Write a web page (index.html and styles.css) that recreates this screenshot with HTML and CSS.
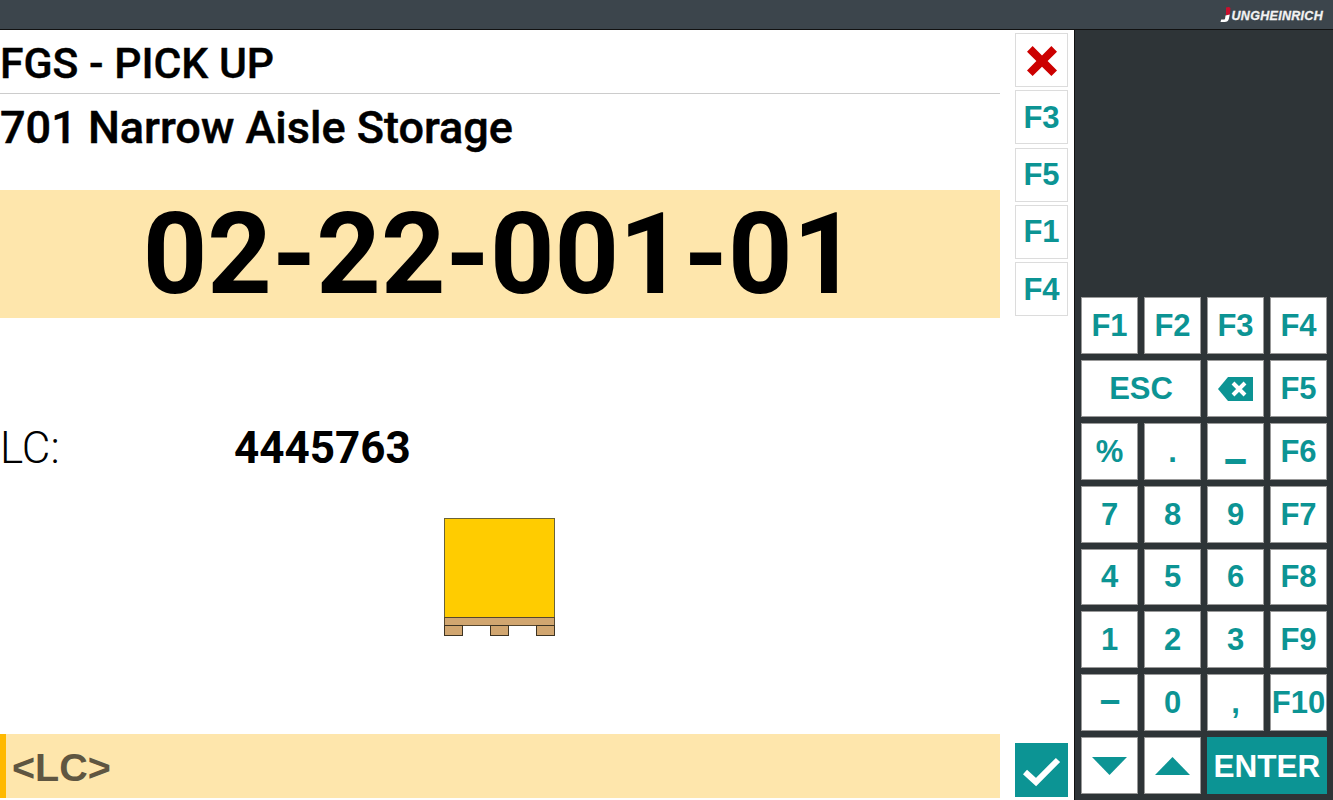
FILE: index.html
```html
<!DOCTYPE html>
<html lang="en">
<head>
  <meta charset="UTF-8">
  <title>FGS - PICK UP</title>
  <link rel="stylesheet" href="styles.css">
</head>
<body>
  <header class="topbar">
    <div class="brand">
      <svg class="brand-mark" width="12" height="16" viewBox="0 0 12 16"><path d="M6 0.5 Q9 -0.5 10.5 1 L9.8 7.5 L6 8.5 Z" fill="#c8102e"/><path d="M5.5 8.5 L9.8 7.5 L8.8 12 Q8.2 15 4.5 15 L0.5 15 L1.2 12.5 L4 12.5 Q5 12.5 5.2 11 Z" fill="#fff"/></svg>
      <span class="brand-name">UNGHEINRICH</span>
    </div>
  </header>

  <div class="app">
    <main class="screen">
      <div class="content">
        <h1 class="title">FGS - PICK UP</h1>
        <h2 class="subtitle">701 Narrow Aisle Storage</h2>
        <div class="location">02-22-001-01</div>
        <div class="field">
          <span class="field-label">LC:</span>
          <span class="field-value">4445763</span>
        </div>
        <div class="pallet">
          <svg width="112" height="119" viewBox="0 0 112 119">
            <rect x="0.5" y="0.5" width="110" height="99" fill="#ffcc00" stroke="#6b6338"/>
            <rect x="0.5" y="99.5" width="110" height="8" fill="#d1a670" stroke="#55462e"/>
            <rect x="0.5" y="107.5" width="18" height="10" fill="#d1a670" stroke="#3d3322"/>
            <rect x="46.5" y="107.5" width="18" height="10" fill="#d1a670" stroke="#3d3322"/>
            <rect x="92.5" y="107.5" width="18" height="10" fill="#d1a670" stroke="#3d3322"/>
          </svg>
        </div>
        <div class="input-bar"><span class="input-hint">&lt;LC&gt;</span></div>
      </div>

      <div class="side">
        <button class="side-btn">
          <svg width="30" height="30" viewBox="0 0 32 32"><path d="M6 0 L16 10 L26 0 L32 6 L22 16 L32 26 L26 32 L16 22 L6 32 L0 26 L10 16 L0 6 Z" fill="#cc0000"/></svg>
        </button>
        <button class="side-btn">F3</button>
        <button class="side-btn">F5</button>
        <button class="side-btn">F1</button>
        <button class="side-btn">F4</button>
        <button class="side-btn confirm">
          <svg width="40" height="32" viewBox="0 0 40 32"><path d="M3 17 L14 27 L36 5" fill="none" stroke="#fff" stroke-width="6"/></svg>
        </button>
      </div>
    </main>

    <aside class="keypad">
      <button class="key">F1</button>
      <button class="key">F2</button>
      <button class="key">F3</button>
      <button class="key">F4</button>
      <button class="key wide">ESC</button>
      <button class="key">
        <svg width="35" height="24" viewBox="0 0 35 24"><path d="M0 12 L10 0 L35 0 L35 24 L10 24 Z" fill="#0c9494"/><path d="M15 6 L27 18 M27 6 L15 18" stroke="#fff" stroke-width="4"/></svg>
      </button>
      <button class="key">F5</button>
      <button class="key">%</button>
      <button class="key">.</button>
      <button class="key"><span class="underscore">_</span></button>
      <button class="key">F6</button>
      <button class="key">7</button>
      <button class="key">8</button>
      <button class="key">9</button>
      <button class="key">F7</button>
      <button class="key">4</button>
      <button class="key">5</button>
      <button class="key">6</button>
      <button class="key">F8</button>
      <button class="key">1</button>
      <button class="key">2</button>
      <button class="key">3</button>
      <button class="key">F9</button>
      <button class="key"><span class="dash">&#8211;</span></button>
      <button class="key">0</button>
      <button class="key">,</button>
      <button class="key">F10</button>
      <button class="key">
        <svg width="35" height="18" viewBox="0 0 35 18"><path d="M0 0 L35 0 L17.5 18 Z" fill="#0c9494"/></svg>
      </button>
      <button class="key">
        <svg width="35" height="18" viewBox="0 0 35 18"><path d="M0 18 L35 18 L17.5 0 Z" fill="#0c9494"/></svg>
      </button>
      <button class="key wide enter">ENTER</button>
    </aside>
  </div>
</body>
</html>
```

FILE: styles.css
```css
html, body {
  margin: 0;
  height: 800px;
  overflow: hidden;
  background-color: #fff;
}
button {
  margin: 0;
  padding: 0;
  cursor: pointer;
}

.topbar {
  height: 29px;
  background-color: #3c454c;
  border-bottom: 1px solid #111;
  display: flex;
  justify-content: flex-end;
  align-items: center;
}
.brand {
  display: flex;
  align-items: center;
  margin-right: 10px;
}
.brand-name {
  font-family: "Liberation Sans", sans-serif;
  font-weight: 700;
  font-style: italic;
  font-size: 12.5px;
  letter-spacing: 0.3px;
  padding-top: 2px;
  color: #f2f2f2;
  -webkit-text-stroke: 0.3px #f2f2f2;
}

.app {
  display: flex;
  height: 770px;
  background-color: #2e3437;
}
.screen {
  width: 1075px;
  flex: none;
  display: flex;
  background-color: #fff;
}
.content {
  width: 1000px;
  flex: none;
  display: flex;
  flex-direction: column;
  color: #000;
  font-family: Roboto, sans-serif;
}
.title {
  margin: 0;
  height: 63px;
  line-height: 66px;
  font-size: 42.7px;
  font-weight: 500;
  -webkit-text-stroke: 0.4px #000;
  border-bottom: 1px solid #ccc;
}
.subtitle {
  margin: 0;
  height: 70px;
  line-height: 68px;
  font-size: 45px;
  font-weight: 500;
  -webkit-text-stroke: 0.5px #000;
}
.location {
  margin-top: 26px;
  height: 128px;
  line-height: 130px;
  background-color: #fee6ac;
  text-align: center;
  font-size: 112.6px;
  font-weight: 700;
}
.field {
  display: flex;
  margin-top: 105px;
  height: 50px;
  line-height: 50px;
  font-size: 44px;
}
.field-label {
  width: 234px;
  font-weight: 300;
}
.field-value {
  font-weight: 700;
}
.pallet {
  display: flex;
  justify-content: center;
  margin-top: 45px;
}
.input-bar {
  margin-top: auto;
  margin-bottom: 2px;
  height: 62px;
  padding: 2px 0 0 6px;
  background-color: #fee6ac;
  border-left: 6px solid #ffb900;
  display: flex;
  align-items: center;
}
.input-hint {
  font-family: "Liberation Sans", sans-serif;
  font-weight: 700;
  font-size: 39.5px;
  color: #5f5641;
}

.side {
  flex: none;
  display: flex;
  flex-direction: column;
  gap: 3.25px;
  padding: 3px 6px 3px 15px;
  border-right: 1px solid #111;
}
.side-btn {
  width: 53px;
  height: 54px;
  padding-top: 1px;
  background-color: #fff;
  border: 1px solid #dcdcdc;
  color: #0c9494;
  font-family: "Liberation Sans", sans-serif;
  font-weight: 700;
  font-size: 31px;
  display: flex;
  align-items: center;
  justify-content: center;
}
.confirm {
  margin-top: auto;
  background-color: #0c9494;
  border-color: #0c9494;
}

.keypad {
  flex: none;
  height: 497px;
  margin-top: auto;
  margin-bottom: 6px;
  padding-left: 6px;
  display: grid;
  grid-template-columns: repeat(4, 57px);
  grid-template-rows: repeat(8, 1fr);
  gap: 6px;
}
.key {
  padding-top: 1px;
  background-color: #fff;
  border: 1px solid #999;
  color: #0c9494;
  font-family: "Liberation Sans", sans-serif;
  font-weight: 700;
  font-size: 31px;
  display: flex;
  align-items: center;
  justify-content: center;
  white-space: nowrap;
}
.underscore {
  font-family: Roboto, sans-serif;
  font-size: 46px;
  line-height: 31px;
  transform: translateY(-8px);
}
.dash {
  font-family: Roboto, sans-serif;
  font-size: 36px;
  line-height: 31px;
}
.wide {
  grid-column: span 2;
}
.enter {
  background-color: #0c9494;
  border-color: #0c9494;
  color: #fff;
  font-size: 31.5px;
}
```
